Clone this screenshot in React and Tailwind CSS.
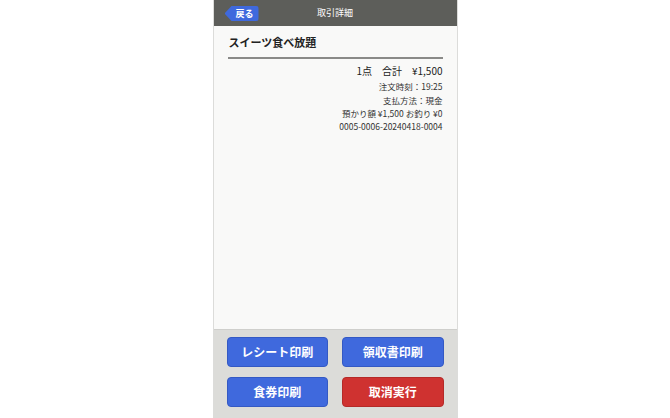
import React from "react";

const font = { fontFamily: '"Noto Sans CJK JP", "Noto Sans", sans-serif' };

const ActionButton = ({ label, red }) => (
  <button
    className={`h-[30px] rounded-[4px] border text-[12px] font-bold text-white ${
      red ? "bg-[#cf3230] border-[#b52a28]" : "bg-[#3f69dd] border-[#3459c4]"
    }`}
  >
    {label}
  </button>
);

export default function App() {
  return (
    <div className="w-full h-[418px] bg-white flex justify-center" style={font}>
      <div className="w-[245px] h-full flex flex-col border-x border-[#dcdcda] bg-[#f9f9f8]">
        {/* header */}
        <div className="relative h-[26px] bg-[#5d5e5a] flex items-center justify-center shrink-0">
          <div className="absolute left-[11px] top-[6px] h-[15px] w-[34px] bg-[#3f69dd] text-white text-[9px] font-bold flex items-center pl-[11px] rounded-r-[3px] [clip-path:polygon(7px_0,100%_0,100%_100%,7px_100%,0_50%)]">
            戻る
          </div>
          <span className="text-white text-[9px]">取引詳細</span>
        </div>

        {/* body */}
        <div className="flex-1 px-[14px] pt-[7px]">
          <div className="text-[11px] font-bold text-[#222] leading-[18px] pl-[1px]">スイーツ食べ放題</div>
          <div className="mt-[6px] h-[2px] bg-[#8a8a88]" />
          <div className="mt-[5px] flex flex-col items-end text-[#222]">
            <div className="text-[10px] leading-[14px]">1点　合計　¥1,500</div>
            <div className="text-[8.5px] leading-[14px] mt-[1px] text-[#333]">注文時刻：19:25</div>
            <div className="text-[8.5px] leading-[14px] text-[#333]">支払方法：現金</div>
            <div className="text-[8.5px] leading-[13px] text-[#333]">預かり額 ¥1,500 お釣り ¥0</div>
            <div className="text-[8.5px] leading-[13px] text-[#333]">0005-0006-20240418-0004</div>
          </div>
        </div>

        {/* footer */}
        <div className="h-[89px] shrink-0 bg-[#dcdcd9] border-t border-[#cfcfcc] px-[13px] pt-[7px] grid grid-cols-2 gap-x-[14px] gap-y-[10px] content-start">
          <ActionButton label="レシート印刷" />
          <ActionButton label="領収書印刷" />
          <ActionButton label="食券印刷" />
          <ActionButton label="取消実行" red />
        </div>
      </div>
    </div>
  );
}
